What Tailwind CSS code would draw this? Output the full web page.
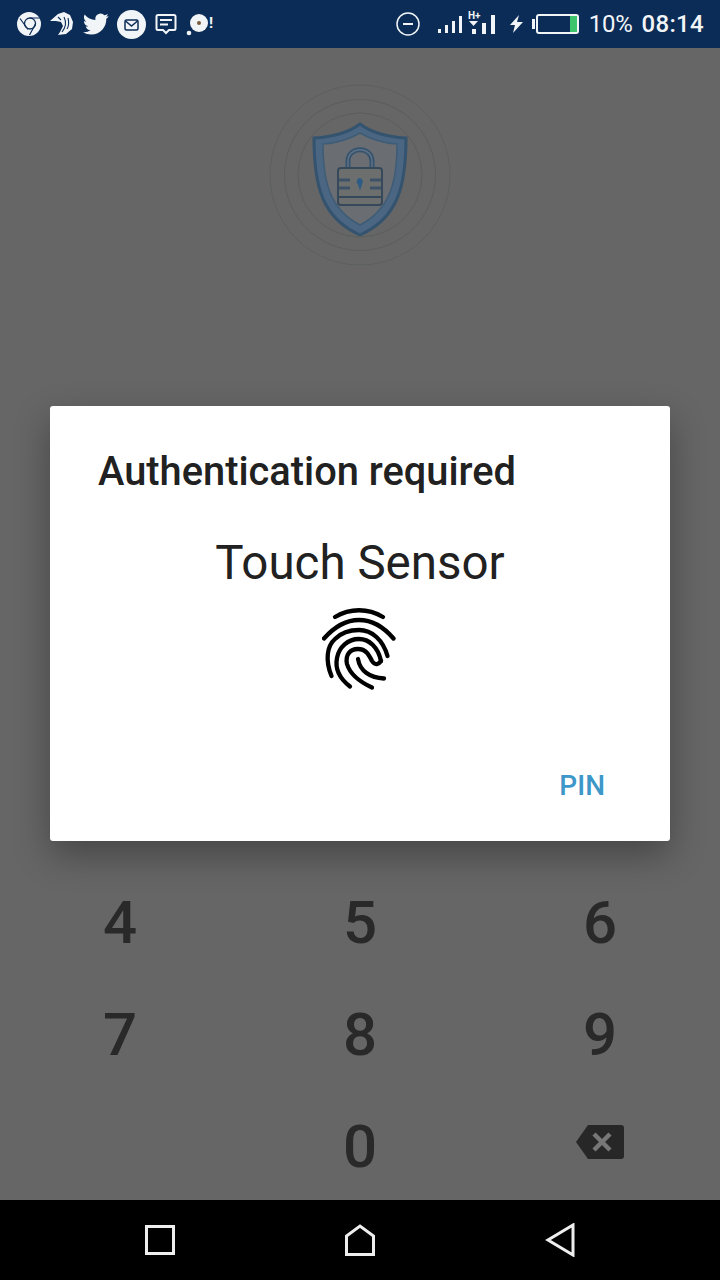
<!DOCTYPE html>
<html lang="en">
<head>
  <meta charset="UTF-8" />
  <title>Authentication</title>
  <script src="https://cdn.jsdelivr.net/npm/@tailwindcss/browser@4"></script>
</head>
<body class="w-[720px] h-[1280px] overflow-hidden flex flex-col bg-[#666666] font-['Roboto',sans-serif]">
  <!-- status bar -->
  <header class="h-12 shrink-0 bg-[#0b2c56] flex items-center justify-between pl-[17px] pr-[16px] text-[#f2f5f8]">
    <div class="flex items-center gap-[9px]">
      <svg class="w-6 h-6" viewBox="0 0 24 24"><circle cx="12" cy="12" r="12" fill="#f2f5f8"/><circle cx="13" cy="11.500" r="5.500" fill="none" stroke="#0b2c56" stroke-width="1.300"/><path d="M3 6.500l8 11M13 6h10M18.500 12l-6 11" stroke="#0b2c56" stroke-width="1.200" fill="none"/></svg>
      <svg class="w-6 h-6" viewBox="0 0 24 24"><path d="M0 9L8 2 14 0 20 3 23 10 22 17 16 22 8 23 10 20 13 14 11 10 6 9z" fill="#f2f5f8"/><path d="M14 5c2 4 2 10-2 15M18 6c1 4 1 8-1 11M8 5l3 3" fill="none" stroke="#0b2c56" stroke-width="1.100"/></svg>
      <svg class="w-[26px] h-[26px]" viewBox="0 0 24 24" fill="#f2f5f8"><path d="M23.600 4.600c-.9.400-1.800.600-2.800.800 1-.600 1.800-1.500 2.100-2.700-.9.600-2 1-3.100 1.200A4.900 4.900 0 0 0 11.500 8.400C7.500 8.200 3.900 6.300 1.500 3.300c-1.300 2.200-.600 5.100 1.500 6.500-.800 0-1.500-.200-2.200-.600 0 2.300 1.600 4.400 3.900 4.900-.7.200-1.500.200-2.200.100.600 2 2.400 3.400 4.600 3.400A9.900 9.900 0 0 1 0 19.600 14 14 0 0 0 7.500 21.800c9.100 0 14.300-7.700 14-14.600 1-.7 1.800-1.600 2.100-2.600z"/></svg>
      <svg class="w-[29px] h-[29px] -ml-[1px]" viewBox="0 0 29 29"><circle cx="14.500" cy="14.500" r="14.500" fill="#f2f5f8"/><rect x="8" y="10" width="13" height="10" rx="1.500" fill="none" stroke="#0b2c56" stroke-width="1.500"/><path d="M8.500 11l6 5 6-5" fill="none" stroke="#0b2c56" stroke-width="1.500"/></svg>
      <svg class="w-[22px] h-[22px]" viewBox="0 0 22 22" fill="none" stroke="#f2f5f8" stroke-width="2"><path d="M3 2h16a1.500 1.500 0 0 1 1.500 1.500v12a1.500 1.500 0 0 1-1.500 1.500h-5l-3 3-3-3h-5a1.500 1.500 0 0 1-1.500-1.500v-12a1.500 1.500 0 0 1 1.500-1.500z"/><path d="M5 7h12M5 11.500h8"/></svg>
      <div class="flex items-center">
        <svg class="w-[24px] h-[24px]" viewBox="0 0 24 24"><circle cx="13" cy="11" r="9" fill="#f2f5f8"/><circle cx="13" cy="11" r="2" fill="#7a5a3a"/><circle cx="3" cy="21" r="2.300" fill="#f2f5f8"/></svg>
        <span class="text-[15px] leading-none font-bold -ml-[1px] -mt-[2px]">!</span>
      </div>
    </div>
    <div class="flex items-center">
      <svg class="w-6 h-6 mr-[17px]" viewBox="0 0 24 24" fill="none" stroke="#f2f5f8" stroke-width="1.500"><circle cx="12" cy="12" r="11"/><path d="M7 12h10" stroke-width="2"/></svg>
      <svg class="w-[26px] h-[20px]" viewBox="0 0 26 20" fill="#f2f5f8"><rect x="1" y="15" width="3" height="4"/><rect x="8" y="11" width="3" height="8"/><rect x="15" y="7" width="3" height="12"/><rect x="22" y="2" width="3" height="17"/></svg>
      <svg class="w-[30px] h-[26px] ml-[5px]" viewBox="0 0 30 26" fill="#f2f5f8"><text x="0" y="8" font-size="10" font-weight="700" font-family="Roboto">H+</text><path d="M1 10h9l-4.500 5z"/><rect x="4" y="18" width="4" height="5"/><rect x="14" y="12" width="4" height="11"/><rect x="23" y="4" width="4" height="19"/></svg>
      <svg class="w-[16px] h-[20px] ml-[11px]" viewBox="0 0 16 20" fill="#f2f5f8"><path d="M10 1L1 11h5l-2 8 10-11H8z"/></svg>
      <div class="flex items-center ml-[7px]">
        <div class="w-[3px] h-[10px] bg-[#f2f5f8]"></div>
        <div class="w-[43px] h-[20px] ml-[1px] border-2 border-[#f2f5f8] rounded-[3px] flex justify-end">
          <div class="w-[7px] bg-[#3ec46d]"></div>
        </div>
      </div>
      <span class="ml-[10px] text-[24px] leading-none tracking-[-0.2px]">10%</span>
      <span class="ml-[9px] text-[24px] leading-none font-medium tracking-[0.3px]">08:14</span>
    </div>
  </header>

  <main class="flex-1 relative flex flex-col">
    <!-- logo behind the dialog -->
    <div class="flex justify-center pt-[36px]">
      <svg class="w-[182px] h-[182px]" viewBox="0 0 182 182" fill="none">
        <circle cx="91" cy="91" r="90" stroke="#5c5f60"/>
        <circle cx="91" cy="91" r="75.500" stroke="#5a5d5e"/>
        <circle cx="91" cy="91" r="62" stroke="#5a5d5e"/>
        <path d="M91 40c12 9 26 13 46 14 0 48-8 80-46 97-38-17-46-49-46-97 20-1 34-5 46-14z" fill="#4a6682" stroke="#34536f" stroke-width="3"/>
        <path d="M91 49c12 7 22 10 37 11 0 40-8 66-37 81-29-15-37-41-37-81 15-1 25-4 37-11z" fill="#6a6e72" stroke="#3f5c76" stroke-width="1.500"/>
        <path d="M79 84V77c0-15 24-15 24 0v7" stroke="#34536f" stroke-width="5"/>
        <path d="M79 84V77c0-15 24-15 24 0v7" stroke="#5f7182" stroke-width="1.500"/>
        <rect x="69" y="84" width="44" height="37" rx="3" fill="#6d6e6e" stroke="#36495b" stroke-width="2"/>
        <path d="M70 113h42" stroke="#36495b" stroke-width="2"/>
        <path d="M70 96h11M70 104h11M101 96h11M101 104h11" stroke="#3d5266" stroke-width="3"/>
        <path d="M90 94a4 4 0 0 1 3 6.500l-2 6-2-6a4 4 0 0 1 1-6.500z" fill="#2d5c86"/>
      </svg>
    </div>

    <!-- keypad behind the dialog -->
    <div class="absolute left-0 right-0 top-[819px] grid grid-cols-3 text-center text-[60px] font-medium leading-[112px] text-[#292929]">
      <span>4</span><span>5</span><span>6</span>
      <span>7</span><span>8</span><span>9</span>
      <span></span><span>0</span>
      <span class="flex items-center justify-center">
        <svg class="w-[50px] h-[36px] -mt-[10px]" viewBox="0 0 50 36"><path d="M13 1h33a3 3 0 0 1 3 3v28a3 3 0 0 1-3 3H13L1 18z" fill="#272727"/><path d="M19 10l16 16M35 10L19 26" stroke="#777777" stroke-width="4.500"/></svg>
      </span>
    </div>

    <!-- dialog -->
    <section class="absolute left-[50px] top-[358px] w-[620px] h-[435px] bg-white rounded-[3px] shadow-[0_14px_36px_rgba(0,0,0,0.32)] flex flex-col">
      <h1 class="mt-[43px] ml-[48px] text-[39.800px] leading-[46px] font-medium text-[#212121]">Authentication required</h1>
      <p class="mt-[40px] text-center text-[47.500px] leading-[56px] text-[#212121]">Touch Sensor</p>
      <svg class="w-[76px] h-[86px] mx-auto mt-[15px]" viewBox="0 0 76 86" fill="none" stroke="#000000" stroke-width="4.300" stroke-linecap="round">
        <path d="M13 11C28 2 46 2 61 11"/>
        <path d="M2 32.500C14 19 26 14 37 14C48 14 60 19 71.500 32.500"/>
        <path d="M9.500 70C3 54 5 40 13 33C20 26 28 24 37 24C50 24 61 34 65.500 50"/>
        <path d="M28 80.500C17 72 13 62 15 52C17 41 26 33 37 33C47 33 56 41 59 55"/>
        <path d="M50 81.500C38 76 28 68 25 58C23 49 28 43 36 43C44 43 47 49 50 55C53 60 57 58 59 55"/>
        <path d="M36 53C38 65 48 72 62 72.500"/>
      </svg>
      <button class="absolute right-[65px] top-[364px] text-[28px] leading-8 font-medium text-[#3d97c9]">PIN</button>
    </section>
  </main>

  <!-- nav bar -->
  <nav class="h-20 shrink-0 bg-black grid grid-cols-3 px-[60px] items-center justify-items-center">
    <svg class="w-[30px] h-[30px]" viewBox="0 0 30 30" fill="none" stroke="#eeeeee" stroke-width="3"><rect x="1.500" y="1.500" width="27" height="27"/></svg>
    <svg class="w-[30px] h-[32px]" viewBox="0 0 30 32" fill="none" stroke="#eeeeee" stroke-width="3"><path d="M1.500 30.500V12L15 2l13.500 10v18.500z"/></svg>
    <svg class="w-[30px] h-[34px]" viewBox="0 0 30 34" fill="none" stroke="#eeeeee" stroke-width="3"><path d="M28 2v30L3 17z"/></svg>
  </nav>
</body>
</html>
